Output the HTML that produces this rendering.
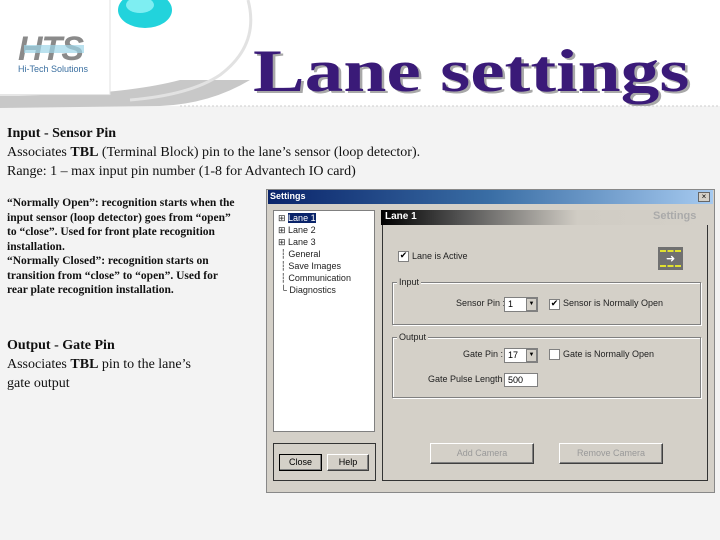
<!DOCTYPE html>
<html><head><style>
*{margin:0;padding:0;box-sizing:border-box}
body{width:720px;height:540px;position:relative;overflow:hidden;background:#f3f3f3;font-family:"Liberation Serif",serif}
.a{position:absolute}
.t{font-family:"Liberation Sans",sans-serif;font-size:9px;color:#222;white-space:nowrap}
.btn{position:absolute;background:#d4d0c8;border:1px solid #fff;border-right-color:#404040;border-bottom-color:#404040;box-shadow:inset -1px -1px 0 #808080;font-family:"Liberation Sans",sans-serif;font-size:9px;text-align:center}
.grp{position:absolute;border:1px solid #808080;box-shadow:1px 1px 0 #fff, inset 1px 1px 0 #fff}
.cb{position:absolute;width:11px;height:11px;background:#fff;border:1px solid #808080;font-size:9px;line-height:9px;text-align:center;font-family:"DejaVu Sans",sans-serif}
.inp{position:absolute;background:#fff;border:1px solid #808080;font-family:"Liberation Sans",sans-serif;font-size:9px;padding-left:3px;line-height:13px}
</style></head><body>
<div class="a" style="left:0;top:0;width:720px;height:106px;background:#fff"></div>
<svg class="a" style="left:0;top:0" width="720" height="120">
<path d="M0 96 L0 108 L160 106 Q210 104 250 80 L180 80 Q120 96 0 96Z" fill="#c8c8c8"/>
<path d="M248 0 Q260 45 220 75 Q190 95 130 100" fill="none" stroke="#e2e2e2" stroke-width="3"/>
<rect x="0" y="25" width="110" height="70" fill="#fff"/>
<line x1="0" y1="95" x2="110" y2="95" stroke="#ccc"/>
<line x1="110" y1="0" x2="110" y2="95" stroke="#e0e0e0"/>
<ellipse cx="145" cy="10" rx="27" ry="18" fill="#22d3dc"/>
<ellipse cx="140" cy="5" rx="14" ry="8" fill="#7eeef2"/>
<line x1="180" y1="106" x2="720" y2="106" stroke="#ccc" stroke-dasharray="2,2"/>
</svg>
<div class="a" style="left:18px;top:30px;font-family:'Liberation Sans',sans-serif;font-weight:bold;font-style:italic;font-size:34px;color:#8a8a8a;letter-spacing:-1px">HTS</div>
<div class="a" style="left:24px;top:45px;width:60px;height:8px;background:#9ed6e8;opacity:.7"></div>
<div class="a" style="left:18px;top:64px;font-family:'Liberation Sans',sans-serif;font-size:9px;color:#3a6fa0">Hi-Tech Solutions</div>
<div class="a" style="left:253px;top:36px;font-size:60px;font-weight:bold;color:#3a1a78;text-shadow:2px 2px 0 #a8a8a8;line-height:70px;white-space:nowrap;transform:scaleX(1.29);transform-origin:0 0">Lane settings</div>

<div class="a" style="left:7px;top:124px;font-size:14px;line-height:19px;color:#111;white-space:nowrap">
<b>Input - Sensor Pin</b><br>Associates <b>TBL</b> (Terminal Block) pin to the lane’s sensor (loop detector).<br>Range: 1 – max input pin number (1-8 for Advantech IO card)</div>
<div class="a" style="left:7px;top:196px;font-size:11.5px;line-height:14.5px;font-weight:bold;color:#111;white-space:nowrap">“Normally Open”: recognition starts when the<br>input sensor (loop detector) goes from “open”<br>to “close”. Used for front plate recognition<br>installation.<br>“Normally Closed”: recognition starts on<br>transition from “close” to “open”. Used for<br>rear plate recognition installation.</div>
<div class="a" style="left:7px;top:336px;font-size:14px;line-height:19px;color:#111;white-space:nowrap"><b>Output - Gate Pin</b><br>Associates <b>TBL</b> pin to the lane’s<br>gate output</div>

<div class="a" style="left:266px;top:189px;width:449px;height:304px;background:#d4d0c8;border:1px solid #888"></div>
<div class="a" style="left:268px;top:190px;width:445px;height:14px;background:linear-gradient(90deg,#0a246a,#3a6ea5 50%,#a6caf0)"></div>
<div class="a t" style="left:270px;top:191px;color:#fff;font-weight:bold">Settings</div>
<div class="a" style="left:698px;top:192px;width:12px;height:10px;background:#d4d0c8;border:1px solid #666;font-size:8px;line-height:8px;text-align:center;font-family:'Liberation Sans',sans-serif">×</div>
<div class="a" style="left:273px;top:210px;width:102px;height:222px;background:#fff;border:1px solid #808080"></div>
<div class="a t" style="left:278px;top:212px;line-height:12px">
<div>⊞ <span style="background:#0a246a;color:#fff">Lane 1</span></div><div>⊞ Lane 2</div><div>⊞ Lane 3</div><div>&nbsp;┆ General</div><div>&nbsp;┆ Save Images</div><div>&nbsp;┆ Communication</div><div>&nbsp;└ Diagnostics</div></div>
<div class="a" style="left:273px;top:443px;width:103px;height:38px;border:1px solid #333"></div>
<div class="btn" style="left:279px;top:454px;width:43px;height:17px;line-height:15px;border:1px solid #000">Close</div>
<div class="btn" style="left:327px;top:454px;width:42px;height:17px;line-height:15px">Help</div>
<div class="a" style="left:381px;top:210px;width:327px;height:15px;background:linear-gradient(90deg,#000,#555 25%,#d0ccc4 60%,#d4d0c8)"></div>
<div class="a t" style="left:385px;top:211px;color:#fff;font-weight:bold;font-size:10px">Lane 1</div>
<div class="a t" style="left:653px;top:210px;color:#aaa;font-weight:bold;font-size:11px">Settings</div>
<div class="a" style="left:382px;top:225px;width:326px;height:256px;border:1px solid #333;border-top:none"></div>
<div class="cb" style="left:398px;top:251px">✔</div>
<div class="a t" style="left:412px;top:251px">Lane is Active</div>
<div class="a" style="left:658px;top:247px;width:25px;height:23px;background:#707070"></div>
<div class="a" style="left:660px;top:250px;width:21px;height:0;border-top:2px dashed #e0e030"></div>
<div class="a" style="left:660px;top:265px;width:21px;height:0;border-top:2px dashed #e0e030"></div>
<div class="a" style="left:666px;top:252px;color:#fff;font-size:11px;font-family:'DejaVu Sans'">➜</div>
<div class="grp" style="left:392px;top:282px;width:309px;height:43px"></div>
<div class="a t" style="left:397px;top:277px;background:#d4d0c8;padding:0 2px">Input</div>
<div class="a t" style="left:456px;top:298px">Sensor Pin :</div>
<div class="inp" style="left:504px;top:297px;width:34px;height:15px">1</div>
<div class="a" style="left:526px;top:298px;width:11px;height:13px;background:#d4d0c8;border:1px solid #808080;font-size:6px;text-align:center;line-height:11px">▼</div>
<div class="cb" style="left:549px;top:299px">✔</div>
<div class="a t" style="left:563px;top:298px">Sensor is Normally Open</div>
<div class="grp" style="left:392px;top:337px;width:309px;height:61px"></div>
<div class="a t" style="left:397px;top:332px;background:#d4d0c8;padding:0 2px">Output</div>
<div class="a t" style="left:463px;top:349px">Gate Pin :</div>
<div class="inp" style="left:504px;top:348px;width:34px;height:15px">17</div>
<div class="a" style="left:526px;top:349px;width:11px;height:13px;background:#d4d0c8;border:1px solid #808080;font-size:6px;text-align:center;line-height:11px">▼</div>
<div class="cb" style="left:549px;top:349px"></div>
<div class="a t" style="left:563px;top:349px">Gate is Normally Open</div>
<div class="a t" style="left:428px;top:374px">Gate Pulse Length :</div>
<div class="inp" style="left:504px;top:373px;width:34px;height:14px">500</div>
<div class="btn" style="left:430px;top:443px;width:104px;height:21px;line-height:19px;color:#999">Add Camera</div>
<div class="btn" style="left:559px;top:443px;width:104px;height:21px;line-height:19px;color:#999">Remove Camera</div>
</body></html>
